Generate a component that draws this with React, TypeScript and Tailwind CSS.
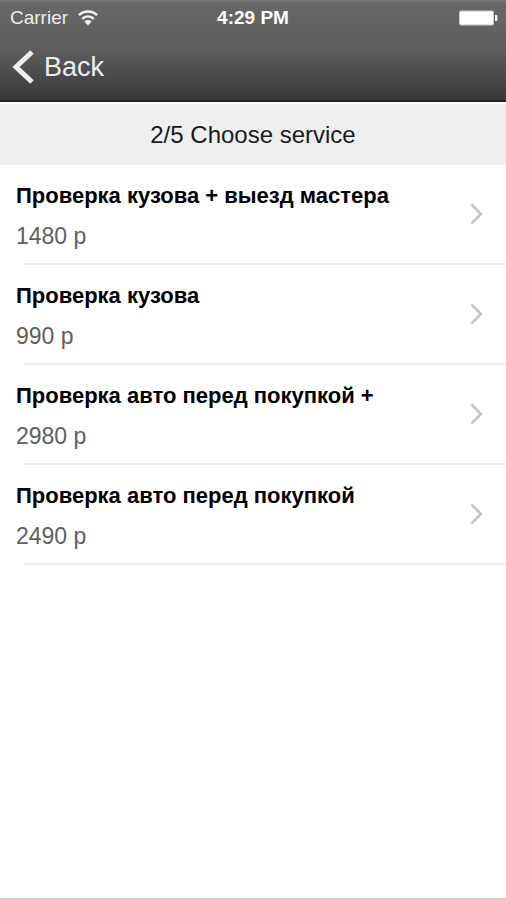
interface Service {
  id: number;
  title: string;
  price: string;
}

const services: Service[] = [
  { id: 1, title: 'Проверка кузова + выезд мастера', price: '1480 р' },
  { id: 2, title: 'Проверка кузова', price: '990 р' },
  { id: 3, title: 'Проверка авто перед покупкой +', price: '2980 р' },
  { id: 4, title: 'Проверка авто перед покупкой', price: '2490 р' },
];

function WifiIcon() {
  return (
    <svg width="20" height="16" viewBox="0 0 20 16" fill="none" stroke="#f2f2f2" aria-hidden="true">
      <path d="M1 5.2C6 .3 14 .3 19 5.2" strokeWidth="2.4" />
      <path d="M4.2 8.8C7.6 5.6 12.4 5.6 15.8 8.8" strokeWidth="2.4" />
      <path d="M6.4 11.6C8.4 9.6 11.6 9.6 13.6 11.6L10 15.5Z" fill="#f2f2f2" stroke="none" />
    </svg>
  );
}

function BatteryIcon() {
  return (
    <svg width="39" height="16" viewBox="0 0 39 16" aria-hidden="true">
      <rect x="0.5" y="1" width="34" height="14" rx="1.5" fill="#fff" stroke="#c8c8c8" />
      <path d="M36 5h1.2a1.2 1.2 0 0 1 1.2 1.2v3.6a1.2 1.2 0 0 1-1.2 1.2H36Z" fill="#f2f2f2" />
    </svg>
  );
}

function StatusBar() {
  return (
    <div className="grid grid-cols-3 items-center px-2 pt-1 text-[19px] leading-6 text-[#eee]">
      <div className="flex items-center gap-2.5 pl-0.5">
        <span>Carrier</span>
        <WifiIcon />
      </div>
      <span className="text-center font-bold text-white">4:29 PM</span>
      <div className="flex justify-end">
        <BatteryIcon />
      </div>
    </div>
  );
}

function ServiceRow({ service }: { service: Service }) {
  return (
    <li>
      <button type="button" className="flex h-[98px] w-full items-center justify-between pr-[23px] pl-4 text-left">
        <span className="flex flex-col gap-3 pt-1">
          <span className="text-[22px] leading-7 font-bold text-black">{service.title}</span>
          <span className="text-[23px] leading-7 text-[#606060]">{service.price}</span>
        </span>
        <svg width="13" height="22" viewBox="0 0 13 22" fill="none" aria-hidden="true">
          <path d="M1.5 1.5 11 11 1.5 20.5" stroke="#c4c4c4" strokeWidth="2.6" />
        </svg>
      </button>
      <div className="ml-6 h-0.5 bg-[#ececec]" />
    </li>
  );
}

export default function App() {
  return (
    <div className="flex min-h-screen flex-col border-b-2 border-[#cfcfcf] bg-white font-['Liberation_Sans',Arial,sans-serif]">
      <header className="h-[102px] border-t-2 border-b-2 border-t-[#747474] border-b-[#222] bg-linear-to-b from-[#686868] via-[#5d5d5d] to-[#383838]">
        <StatusBar />
        <button type="button" className="mt-5 ml-3 flex items-center gap-2.5 text-[27px] leading-8 text-[#eee]">
          <svg width="22" height="34" viewBox="0 0 22 34" fill="none" aria-hidden="true">
            <path d="M20 2 4 17 20 32" stroke="#eee" strokeWidth="5" />
          </svg>
          Back
        </button>
      </header>

      <h1 className="mt-0.5 bg-[#efefef] pt-4 pb-[15px] text-center text-[24px] leading-[30px] text-[#1a1a1a]">
        2/5 Choose service
      </h1>

      <ul>
        {services.map((service) => (
          <ServiceRow key={service.id} service={service} />
        ))}
      </ul>
    </div>
  );
}
